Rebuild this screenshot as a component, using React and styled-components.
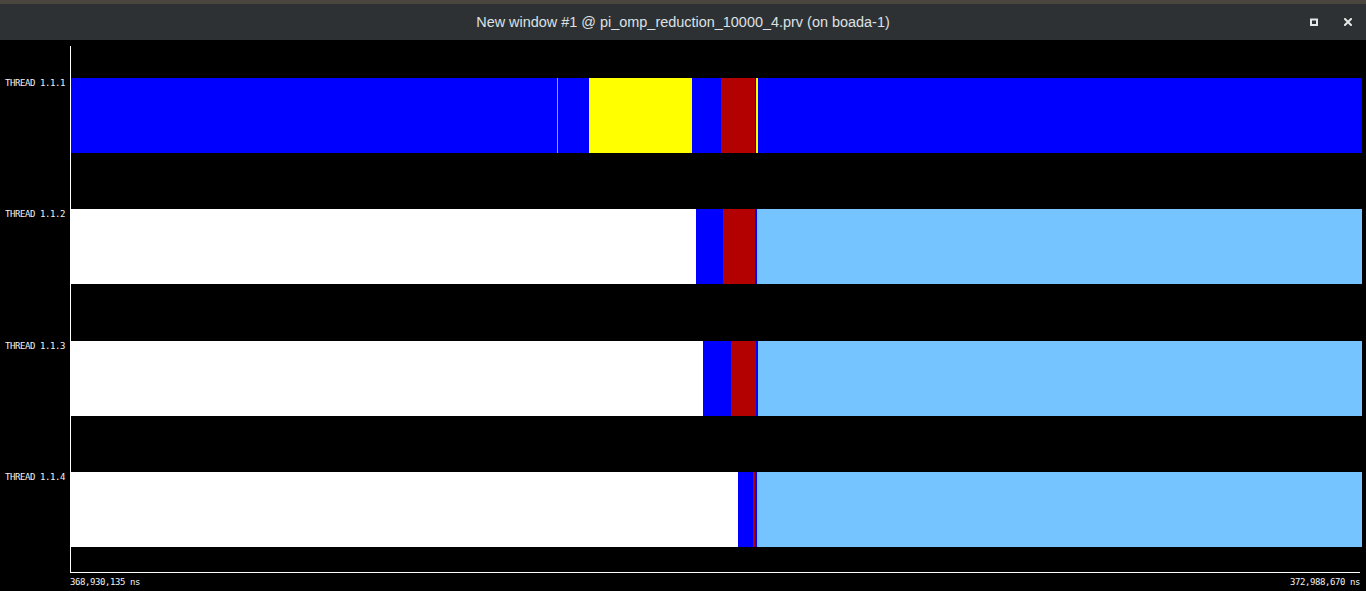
import React from 'react';
import styled, { createGlobalStyle } from 'styled-components';

const LANE = 1291;

const BLUE = '#0000ff';
const YELLOW = '#ffff00';
const RED = '#b30000';
const WHITE = '#ffffff';
const IDLE = '#75c3ff';

const threads = [
    {
        name: 'THREAD 1.1.1',
        segments: [
            [486, BLUE], [1, '#a8a878'], [31, BLUE], [103, YELLOW], [29, BLUE],
            [34, RED], [1, BLUE], [2, YELLOW], [604, BLUE],
        ],
    },
    {
        name: 'THREAD 1.1.2',
        segments: [[625, WHITE], [27, BLUE], [32, RED], [2, BLUE], [605, IDLE]],
    },
    {
        name: 'THREAD 1.1.3',
        segments: [[632, WHITE], [28, BLUE], [25, RED], [2, BLUE], [604, IDLE]],
    },
    {
        name: 'THREAD 1.1.4',
        segments: [[667, WHITE], [15, BLUE], [2, RED], [2, BLUE], [605, IDLE]],
    },
];

const GlobalStyle = createGlobalStyle`
    html, body {
        margin: 0;
        padding: 0;
        background: #000;
        height: 591px;
        overflow: hidden;
    }
`;

const Window = styled.div`
    display: flex;
    flex-direction: column;
    height: 591px;
    background: #000;
`;

const TitleBar = styled.div`
    height: 36px;
    border-top: 4px solid #4a463f;
    background: #2d3134;
    display: grid;
    grid-template-columns: 1fr auto 1fr;
    align-items: center;

    .title {
        grid-column: 2;
        font-family: 'Liberation Sans', Arial, sans-serif;
        font-size: 14.45px;
        color: #dde1e4;
        white-space: nowrap;
    }

    .controls {
        grid-column: 3;
        justify-self: end;
        display: flex;
        align-items: center;
        gap: 26px;
        padding-right: 14px;
    }
`;

const WindowButton = styled.svg`
    width: 8px;
    height: 8px;
    display: block;
`;

const Chart = styled.div`
    display: flex;
    margin-top: 6px;
`;

const LabelColumn = styled.div`
    width: 70px;
    display: flex;
    flex-direction: column;
    gap: 56.33px;
    padding-top: 32px;
`;

const Label = styled.div`
    height: 75px;
    padding-left: 5px;
    font-family: 'DejaVu Sans Mono', monospace;
    font-size: 9px;
    letter-spacing: -0.42px;
    line-height: 10px;
    color: #f2f2f2;
    white-space: nowrap;
`;

const Plot = styled.div`
    flex: 1;
    border-left: 1px solid #fff;
    padding: 32px 4px 25px 0;
    display: flex;
    flex-direction: column;
    gap: 56.33px;
`;

const Bar = styled.div`
    height: 75px;
    display: flex;
`;

const Segment = styled.div`
    flex: ${p => p.$w} 0 0;
    min-width: 0;
    background: ${p => p.$color};
`;

const AxisLine = styled.div`
    height: 1px;
    background: #fff;
    margin: 0 6px 0 70px;
`;

const AxisLabels = styled.div`
    display: flex;
    justify-content: space-between;
    padding: 4px 6px 0 70px;
    font-family: 'DejaVu Sans Mono', monospace;
    font-size: 9px;
    letter-spacing: -0.42px;
    line-height: 10px;
    color: #f2f2f2;
`;

const App = () => {
    return (
        <Window>
            <GlobalStyle />
            <TitleBar>
                <span className='title'>New window #1 @ pi_omp_reduction_10000_4.prv (on boada-1)</span>
                <div className='controls'>
                    <WindowButton viewBox='0 0 8 8'>
                        <rect x='1' y='1.5' width='6' height='5.5' fill='none' stroke='#e6e6e6' strokeWidth='2' />
                    </WindowButton>
                    <WindowButton viewBox='0 0 8 8'>
                        <path d='M1 1 L7 7 M7 1 L1 7' stroke='#e6e6e6' strokeWidth='2' strokeLinecap='square' />
                    </WindowButton>
                </div>
            </TitleBar>
            <Chart>
                <LabelColumn>
                    {threads.map(t => <Label key={t.name}>{t.name}</Label>)}
                </LabelColumn>
                <Plot>
                    {threads.map(t => (
                        <Bar key={t.name}>
                            {t.segments.map(([w, color], i) => (
                                <Segment key={i} $w={w / LANE} $color={color} />
                            ))}
                        </Bar>
                    ))}
                </Plot>
            </Chart>
            <AxisLine />
            <AxisLabels>
                <span>368,930,135 ns</span>
                <span>372,988,670 ns</span>
            </AxisLabels>
        </Window>
    );
};

export default App;
